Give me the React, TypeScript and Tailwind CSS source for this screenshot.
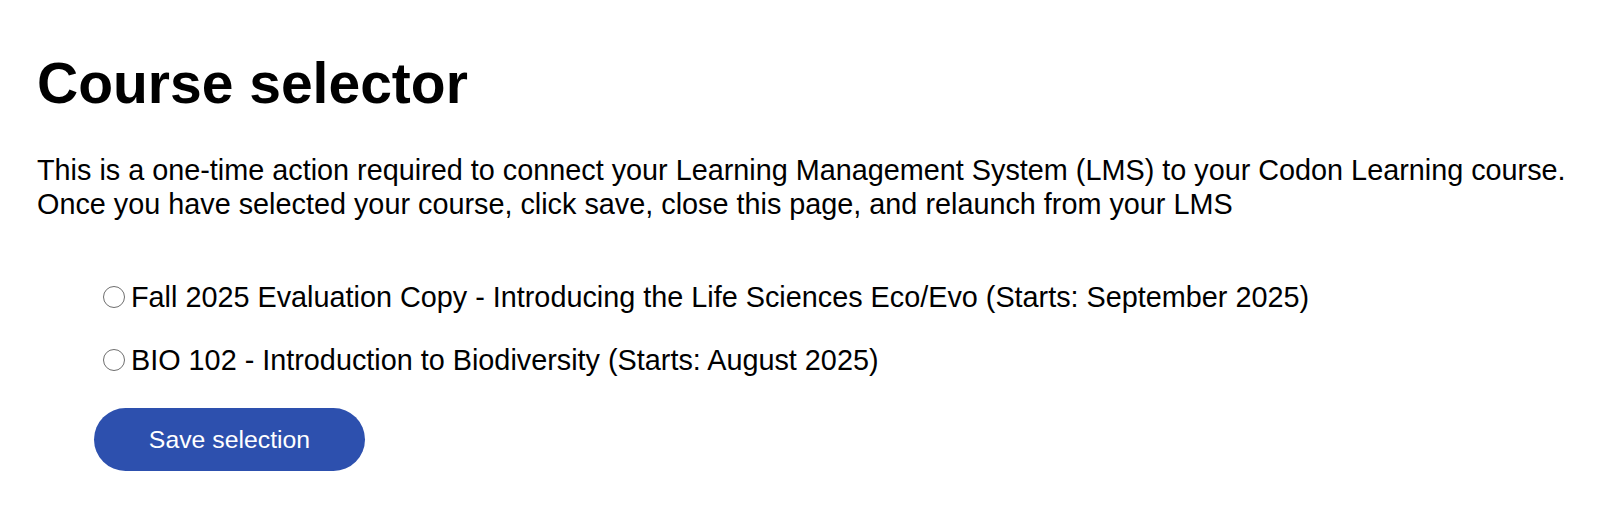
import React, { useState } from "react";

const courses = [
  "Fall 2025 Evaluation Copy - Introducing the Life Sciences Eco/Evo (Starts: September 2025)",
  "BIO 102 - Introduction to Biodiversity (Starts: August 2025)",
];

export default function App() {
  const [sel, setSel] = useState<number | null>(null);
  return (
    <div
      className="min-h-[521px] bg-white text-black pl-[37px] pt-[54px]"
      style={{ fontFamily: '"Liberation Sans", Arial, Helvetica, sans-serif' }}
    >
      <h1 className="text-[57px] leading-[58px] font-bold">Course selector</h1>
      <p className="mt-[42px] text-[28.8px] leading-[33.7px]">
        This is a one-time action required to connect your Learning Management System (LMS) to your Codon Learning course.
        <br />
        Once you have selected your course, click save, close this page, and relaunch from your LMS
      </p>
      <div className="mt-[58px] pl-[66px] flex flex-col gap-[27px]">
        {courses.map((c, i) => (
          <label key={i} className="flex items-center h-[36px] text-[28.8px] leading-[36px] cursor-pointer">
            <input
              type="radio"
              name="course"
              checked={sel === i}
              onChange={() => setSel(i)}
              className="appearance-none w-[22px] h-[22px] rounded-full border-[1.5px] border-[#6e6e6e] bg-white mr-[6px] shrink-0 checked:border-[6px] checked:border-[#2d50ae]"
            />
            <span>{c}</span>
          </label>
        ))}
      </div>
      <div className="mt-[30px] pl-[57px]">
        <button className="w-[271px] h-[63px] rounded-full bg-[#2d50ae] text-white text-[24.8px]">
          Save selection
        </button>
      </div>
    </div>
  );
}
